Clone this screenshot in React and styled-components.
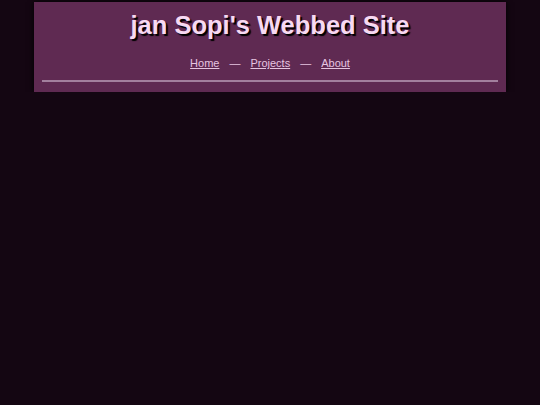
import styled, { createGlobalStyle } from "styled-components";

const GlobalStyle = createGlobalStyle`
  html, body {
    margin: 0;
    padding: 0;
    background: #140612;
    font-family: "Liberation Sans", Arial, sans-serif;
  }
`

const Header = styled.header`
  width: 472px;
  margin: 2px auto 0 auto;
  padding: 8px 8px 10px 8px;
  box-sizing: border-box;

  background: #5f2a52;
  box-shadow: 0 0 6px #000;
`

const Title = styled.h1`
  margin: 0;

  font-size: 25.5px;
  line-height: 30px;
  font-weight: bold;
  text-align: center;
  color: #f7d9f2;
  text-shadow: 2px 2px 1px #000;
`

const Nav = styled.nav`
  margin-top: 16px;

  display: flex;
  justify-content: center;
  align-items: center;
  gap: 10px;

  font-size: 11px;
  line-height: 14px;
  color: #e6c4e0;
`

const NavLink = styled.a`
  color: #e6c4e0;
  text-decoration: underline;
`

const Divider = styled.hr`
  margin: 10px 0 0 0;
  height: 2px;
  border: none;
  background: #a3809e;
`

export default function App() {
  return (
    <>
      <GlobalStyle />
      <Header>
        <Title>jan Sopi's Webbed Site</Title>
        <Nav>
          <NavLink href="#">Home</NavLink>
          <span>—</span>
          <NavLink href="#">Projects</NavLink>
          <span>—</span>
          <NavLink href="#">About</NavLink>
        </Nav>
        <Divider />
      </Header>
    </>
  )
}
